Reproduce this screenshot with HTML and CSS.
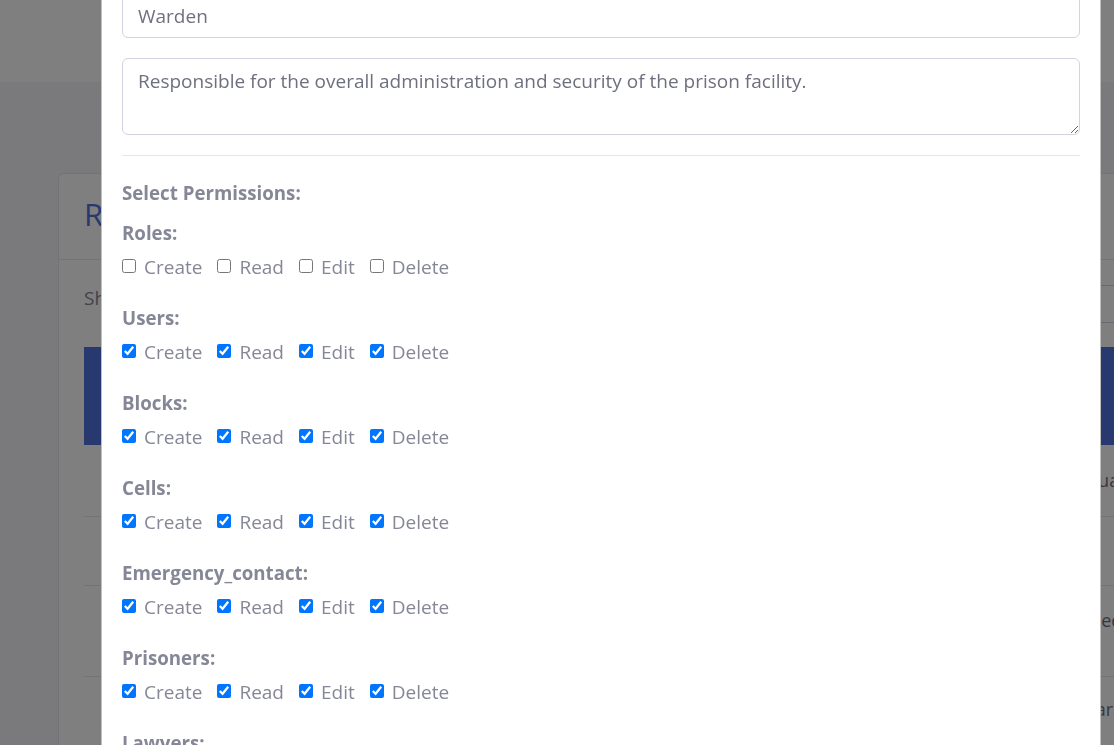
FILE: index.html
```html
<!DOCTYPE html>
<html lang="en">
<head>
<meta charset="utf-8">
<title>Roles</title>
<link rel="stylesheet" href="styles.css">
</head>
<body>
<div class="page">
  <header class="topbar"></header>
  <main class="content">
    <section class="card">
      <div class="card-header"><h2 class="card-title">Roles</h2></div>
      <div class="card-body">
        <div class="dt-top">
          <div class="dt-length">Show <span class="select">10</span> entries</div>
          <div class="dt-search">Search: <span class="search-box"></span></div>
        </div>
        <table class="table">
          <colgroup><col class="w-id"><col class="w-name"><col class="w-desc"><col class="w-more"><col></colgroup>
          <thead>
            <tr><th>ID<br><span class="sort">▲</span></th><th>Role Name</th><th>Permissions</th><th></th><th>Actions</th></tr>
          </thead>
          <tbody>
            <tr class="r1"><td>1</td><td>Administrator</td><td>All permissions</td><td>Guard access to the system</td><td>Edit</td></tr>
            <tr class="r2"><td>2</td><td>Warden</td><td>Users, Blocks, Cells</td><td></td><td>Edit</td></tr>
            <tr class="r3"><td>3</td><td>Doctor</td><td>Prisoners</td><td class="up">Medical records</td><td>Edit</td></tr>
            <tr class="r4"><td>4</td><td>Lawyer</td><td>Lawyers</td><td class="dn">Paralegal</td><td>Edit</td></tr>
          </tbody>
        </table>
      </div>
    </section>
  </main>
</div>

<div class="backdrop"></div>

<div class="modal">
  <div class="modal-dialog">
    <div class="modal-content">
      <form class="modal-body">
        <div class="form-group">
          <input class="form-control" type="text" value="Warden">
        </div>
        <div class="form-group">
          <textarea class="form-control textarea">Responsible for the overall administration and security of the prison facility.</textarea>
        </div>
        <hr class="divider">
        <div class="perm-title">Select Permissions:</div>
        <div class="perms">
          <div class="perm-group">
            <div class="group-title">Roles:</div>
            <div class="perm-row">
              <label class="perm-item"><input type="checkbox"><span>Create</span></label>
              <label class="perm-item"><input type="checkbox"><span>Read</span></label>
              <label class="perm-item"><input type="checkbox"><span>Edit</span></label>
              <label class="perm-item"><input type="checkbox"><span>Delete</span></label>
            </div>
          </div>
          <div class="perm-group">
            <div class="group-title">Users:</div>
            <div class="perm-row">
              <label class="perm-item"><input type="checkbox" checked><span>Create</span></label>
              <label class="perm-item"><input type="checkbox" checked><span>Read</span></label>
              <label class="perm-item"><input type="checkbox" checked><span>Edit</span></label>
              <label class="perm-item"><input type="checkbox" checked><span>Delete</span></label>
            </div>
          </div>
          <div class="perm-group">
            <div class="group-title">Blocks:</div>
            <div class="perm-row">
              <label class="perm-item"><input type="checkbox" checked><span>Create</span></label>
              <label class="perm-item"><input type="checkbox" checked><span>Read</span></label>
              <label class="perm-item"><input type="checkbox" checked><span>Edit</span></label>
              <label class="perm-item"><input type="checkbox" checked><span>Delete</span></label>
            </div>
          </div>
          <div class="perm-group">
            <div class="group-title">Cells:</div>
            <div class="perm-row">
              <label class="perm-item"><input type="checkbox" checked><span>Create</span></label>
              <label class="perm-item"><input type="checkbox" checked><span>Read</span></label>
              <label class="perm-item"><input type="checkbox" checked><span>Edit</span></label>
              <label class="perm-item"><input type="checkbox" checked><span>Delete</span></label>
            </div>
          </div>
          <div class="perm-group">
            <div class="group-title">Emergency_contact:</div>
            <div class="perm-row">
              <label class="perm-item"><input type="checkbox" checked><span>Create</span></label>
              <label class="perm-item"><input type="checkbox" checked><span>Read</span></label>
              <label class="perm-item"><input type="checkbox" checked><span>Edit</span></label>
              <label class="perm-item"><input type="checkbox" checked><span>Delete</span></label>
            </div>
          </div>
          <div class="perm-group">
            <div class="group-title">Prisoners:</div>
            <div class="perm-row">
              <label class="perm-item"><input type="checkbox" checked><span>Create</span></label>
              <label class="perm-item"><input type="checkbox" checked><span>Read</span></label>
              <label class="perm-item"><input type="checkbox" checked><span>Edit</span></label>
              <label class="perm-item"><input type="checkbox" checked><span>Delete</span></label>
            </div>
          </div>
          <div class="perm-group">
            <div class="group-title">Lawyers:</div>
            <div class="perm-row">
              <label class="perm-item"><input type="checkbox" checked><span>Create</span></label>
              <label class="perm-item"><input type="checkbox" checked><span>Read</span></label>
              <label class="perm-item"><input type="checkbox" checked><span>Edit</span></label>
              <label class="perm-item"><input type="checkbox" checked><span>Delete</span></label>
            </div>
          </div>
        </div>
      </form>
    </div>
  </div>
</div>
</body>
</html>
```
FILE: styles.css
```css
* { box-sizing: border-box; }

html, body {
  margin: 0;
  height: 100%;
  overflow: hidden;
}

body {
  font-family: "Open Sans", "Noto Sans", "Liberation Sans", sans-serif;
  font-size: 19px;
  background: #f4f5f9;
  color: #858796;
}

/* ---------- page behind the modal ---------- */
.page { width: 1240px; }

.topbar {
  height: 82px;
  background: #fff;
}

.content { padding: 91px 0 0 58px; }

.card {
  width: 1120px;
  background: #fff;
  border: 1px solid #e3e6f0;
  border-radius: 6px;
}

.card-header {
  height: 86px;
  padding: 22px 25px 0;
  border-bottom: 1px solid #e3e6f0;
}

.card-title {
  margin: 0;
  font-size: 31px;
  line-height: 37px;
  font-weight: 400;
  color: #4e73df;
}

.card-body { padding: 25px; }

.dt-top {
  display: flex;
  justify-content: space-between;
  align-items: flex-start;
  height: 38px;
  color: #858796;
}

.dt-length { line-height: 27px; }

.dt-search {
  display: flex;
  align-items: center;
  gap: 8px;
}

.search-box {
  display: block;
  width: 300px;
  height: 38px;
  border: 1px solid #d1d3e2;
  border-radius: 6px;
}

.table {
  width: 100%;
  margin-top: 24px;
  border-collapse: collapse;
  table-layout: fixed;
  font-size: 18px;
  color: #6e707e;
}

.w-id { width: 70px; }
.w-name { width: 250px; }
.w-desc { width: 664px; }
.w-more { width: 300px; }

.table thead tr {
  height: 98px;
  background: #4e73df;
  color: #fff;
}

.table th {
  text-align: left;
  padding: 10px 16px;
  font-weight: 700;
  line-height: 26px;
}

.sort { font-size: 13px; }

.table td {
  padding: 0 16px 0 17px;
  border-bottom: 1px solid #e3e6f0;
}

.r1 { height: 71px; }
.r2 { height: 69px; }
.r3 { height: 91px; }
.r4 { height: 90px; }

.table td.up { vertical-align: top; padding-top: 22px; }
.table td.dn { vertical-align: top; padding-top: 20px; }

/* ---------- modal ---------- */
.backdrop {
  position: fixed;
  inset: 0;
  background: rgba(0, 0, 0, 0.5);
}

.modal {
  position: fixed;
  inset: 0;
  overflow: hidden;
}

.modal-dialog {
  width: 1000px;
  margin: -27px 0 0 101px;
}

.modal-content {
  background: #fff;
  border: 1px solid rgba(0, 0, 0, 0.25);
  border-radius: 5px;
}

.modal-body {
  padding: 20px 20px 40px;
  margin: 0;
}

.form-group { margin-bottom: 20px; }

.form-control {
  display: block;
  width: 100%;
  margin: 0;
  font-family: inherit;
  font-size: 19px;
  line-height: 27px;
  color: #6e707e;
  background: #fff;
  border: 1px solid #d1d3e2;
  border-radius: 6px;
  padding: 7.5px 15px;
  outline: none;
}

.textarea {
  height: 77px;
  padding-top: 8.5px;
  resize: vertical;
}

.divider {
  margin: 0;
  border: 0;
  border-top: 1px solid #e3e6f0;
}

.perm-title,
.group-title {
  font-weight: 700;
  font-size: 18.7px;
  line-height: 27px;
  color: #858796;
}

.perm-title { padding-top: 22.5px; }

.perms {
  display: flex;
  flex-direction: column;
  gap: 23px;
  margin-top: 13px;
}

.perm-row {
  display: flex;
  margin-top: 8px;
}

.perm-item {
  display: flex;
  align-items: flex-start;
  margin-right: 15px;
  line-height: 27px;
  color: #858796;
}

.perm-item input {
  width: 14px;
  height: 14px;
  margin: 5px 8px 0 0;
  flex: none;
}
```
